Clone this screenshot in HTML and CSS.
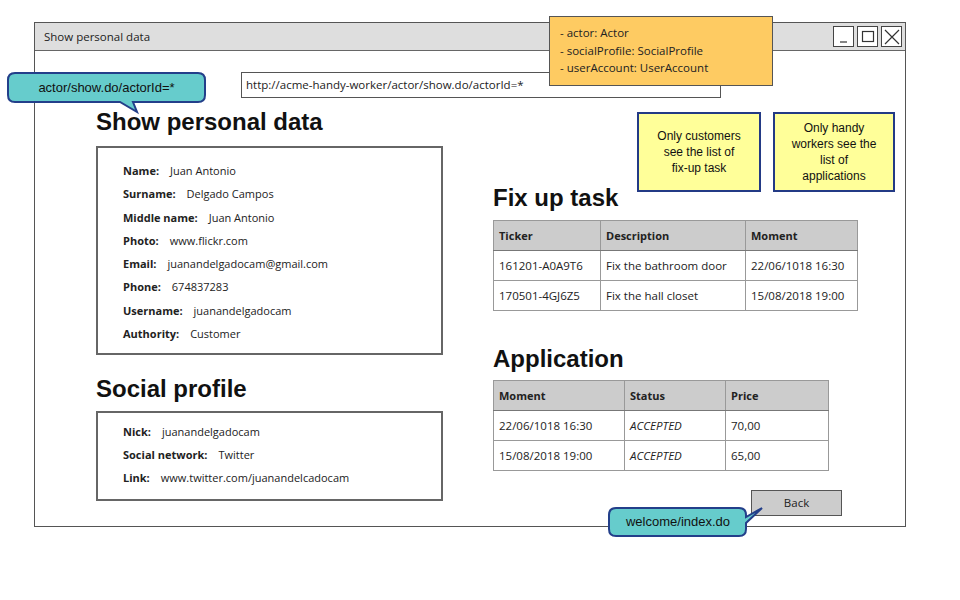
FILE: index.html
```html
<!DOCTYPE html>
<html>
<head>
<meta charset="utf-8">
<link rel="stylesheet" href="styles.css">
</head>
<body>
<div class="page">
  <div class="window">
    <div class="titlebar">
      <span class="title">Show personal data</span>
      <div class="controls">
        <span class="ctrl"><svg width="18" height="18" viewBox="0 0 18 18"><path d="M5 14 H12" stroke="#333" stroke-width="1.2"/></svg></span>
        <span class="ctrl"><svg width="18" height="18" viewBox="0 0 18 18"><rect x="3.5" y="3.5" width="11" height="10" fill="none" stroke="#333" stroke-width="1.2"/></svg></span>
        <span class="ctrl"><svg width="18" height="18" viewBox="0 0 18 18"><path d="M2 2 L16 16 M16 2 L2 16" stroke="#333" stroke-width="1.2"/></svg></span>
      </div>
    </div>
    <div class="content">
      <div class="urlbar">http://acme-handy-worker/actor/show.do/actorId=*</div>
      <div class="columns">
        <div class="col-left">
          <h2 class="heading">Show personal data</h2>
          <div class="databox personal">
            <div class="row"><b>Name:</b><span>Juan Antonio</span></div>
            <div class="row"><b>Surname:</b><span>Delgado Campos</span></div>
            <div class="row"><b>Middle name:</b><span>Juan Antonio</span></div>
            <div class="row"><b>Photo:</b><span>www.flickr.com</span></div>
            <div class="row"><b>Email:</b><span>juanandelgadocam@gmail.com</span></div>
            <div class="row"><b>Phone:</b><span>674837283</span></div>
            <div class="row"><b>Username:</b><span>juanandelgadocam</span></div>
            <div class="row"><b>Authority:</b><span>Customer</span></div>
          </div>
          <h2 class="heading social-h">Social profile</h2>
          <div class="databox social">
            <div class="row"><b>Nick:</b><span>juanandelgadocam</span></div>
            <div class="row"><b>Social network:</b><span>Twitter</span></div>
            <div class="row"><b>Link:</b><span>www.twitter.com/juanandelcadocam</span></div>
          </div>
        </div>
        <div class="col-right">
          <h2 class="heading">Fix up task</h2>
          <table class="grid t1">
            <colgroup><col style="width:107px"><col style="width:145px"><col style="width:112px"></colgroup>
            <tr><th>Ticker</th><th>Description</th><th>Moment</th></tr>
            <tr><td>161201-A0A9T6</td><td>Fix the bathroom door</td><td>22/06/1018 16:30</td></tr>
            <tr><td>170501-4GJ6Z5</td><td>Fix the hall closet</td><td>15/08/2018 19:00</td></tr>
          </table>
          <h2 class="heading app-h">Application</h2>
          <table class="grid t2">
            <colgroup><col style="width:131px"><col style="width:101px"><col style="width:103px"></colgroup>
            <tr><th>Moment</th><th>Status</th><th>Price</th></tr>
            <tr><td>22/06/1018 16:30</td><td class="it">ACCEPTED</td><td>70,00</td></tr>
            <tr><td>15/08/2018 19:00</td><td class="it">ACCEPTED</td><td>65,00</td></tr>
          </table>
          <div class="back">Back</div>
        </div>
      </div>
    </div>
  </div>

  <div class="orange-note">
    <div>- actor: Actor</div>
    <div>- socialProfile: SocialProfile</div>
    <div>- userAccount: UserAccount</div>
  </div>

  <div class="sticky note1">Only customers see the list of fix-up task</div>
  <div class="sticky note2">Only handy workers see the list of applications</div>

  <div class="callout c-top">
    <svg class="shape" width="200" height="42" viewBox="0 0 200 42"><path d="M8,1 H191 Q198,1 198,8 V23 Q198,30 191,30 H126 L130,40 L113,30 H8 Q1,30 1,23 V8 Q1,1 8,1 Z" fill="#66cccc" stroke="#233f8a" stroke-width="2"/></svg>
    <span class="ctext">actor/show.do/actorId=*</span>
  </div>
  <div class="callout c-bottom">
    <svg class="shape" width="158" height="32" viewBox="0 0 158 32"><path d="M8,1 H131 Q138,1 138,8 V10 L154,1 L138,16 V22 Q138,29 131,29 H8 Q1,29 1,22 V8 Q1,1 8,1 Z" fill="#66cccc" stroke="#233f8a" stroke-width="2"/></svg>
    <span class="ctext">welcome/index.do</span>
  </div>
</div>
</body>
</html>
```

FILE: styles.css
```css
* { box-sizing: border-box; }
html, body { margin: 0; padding: 0; background: #fff; }
body {
  font-family: "Open Sans", "DejaVu Sans", sans-serif;
  font-size: 11px;
  color: #222;
}
.page {
  position: relative;
  width: 960px;
  height: 600px;
  padding: 22px 0 0 34px;
}
.window {
  width: 872px;
  height: 505px;
  border: 1.5px solid #555;
  background: #fff;
}
.titlebar {
  height: 28px;
  background: #dedede;
  border-bottom: 1.5px solid #666;
  display: flex;
  align-items: center;
  padding: 0 3px 0 9px;
}
.title { font-size: 11.5px; color: #222; }
.controls { margin-left: auto; display: flex; gap: 3px; }
.ctrl {
  width: 21px;
  height: 21px;
  border: 1.2px solid #444;
  background: #fff;
  display: flex;
  align-items: center;
  justify-content: center;
}
.urlbar {
  margin: 21px 0 0 206px;
  width: 480px;
  height: 26px;
  border: 1.2px solid #555;
  padding: 0 0 0 4px;
  line-height: 24px;
  font-size: 11.5px;
}
.columns {
  display: grid;
  grid-template-columns: 347px 365px;
  column-gap: 50px;
  margin-left: 61px;
}
.heading {
  font-family: "Liberation Sans", Arial, sans-serif;
  font-weight: bold;
  font-size: 24px;
  line-height: 26px;
  margin: 0;
  color: #111;
}
.col-left .heading:first-child { margin-top: 11px; margin-bottom: 11px; }
.databox {
  border: 2px solid #666;
  padding-left: 25px;
}
.personal { height: 209px; padding-top: 11px; }
.social-h { margin-top: 21px; margin-bottom: 9px; }
.social { height: 90px; padding-top: 7px; }
.row { line-height: 23.3px; white-space: nowrap; }
.social .row { line-height: 23px; }
.row b { font-weight: bold; margin-right: 11px; }
.col-right { padding-top: 87px; }
.col-right .heading:first-child { margin-bottom: 9px; }
.grid {
  border-collapse: collapse;
  table-layout: fixed;
  border: 1px solid #999;
}
.t1 { width: 364px; }
.t2 { width: 335px; }
.grid th, .grid td {
  height: 30px;
  padding: 0 5px;
  text-align: left;
  font-size: 11.5px;
  border: 1px solid #999;
  white-space: nowrap;
}
.grid th {
  background: #cccccc;
  font-weight: bold;
  font-size: 11px;
  border-bottom: 1.5px solid #777;
}
.grid td.it { font-style: italic; }
.app-h { margin-top: 35px; margin-bottom: 8px; }
.back {
  margin: 19px 0 0 258px;
  width: 91px;
  height: 26px;
  background: #cccccc;
  border: 1.5px solid #555;
  text-align: center;
  line-height: 23px;
  font-size: 11.5px;
}
.orange-note {
  position: absolute;
  left: 549px;
  top: 16px;
  width: 224px;
  height: 70px;
  background: #fecb62;
  border: 1.2px solid #555;
  padding: 7px 0 0 10px;
  line-height: 17.5px;
  font-size: 11.5px;
}
.sticky {
  position: absolute;
  top: 112px;
  height: 80px;
  background: #ffff99;
  border: 2px solid #233a85;
  font-family: "Liberation Sans", Arial, sans-serif;
  font-size: 12px;
  line-height: 16px;
  text-align: center;
  display: flex;
  align-items: center;
  justify-content: center;
  color: #111;
}
.note1 { left: 637px; width: 124px; padding: 0 16px; }
.note2 { left: 773px; width: 122px; padding: 0 16px; }
.callout { position: absolute; }
.callout .shape { position: absolute; left: 0; top: 0; overflow: visible; }
.ctext {
  position: relative;
  display: block;
  text-align: center;
  font-family: "Liberation Sans", Arial, sans-serif;
  font-size: 13px;
  color: #111;
}
.c-top { left: 7px; top: 72px; width: 199px; height: 31px; }
.c-top .ctext { line-height: 31px; }
.c-bottom { left: 608px; top: 507px; width: 140px; height: 30px; }
.c-bottom .ctext { line-height: 30px; }
```
